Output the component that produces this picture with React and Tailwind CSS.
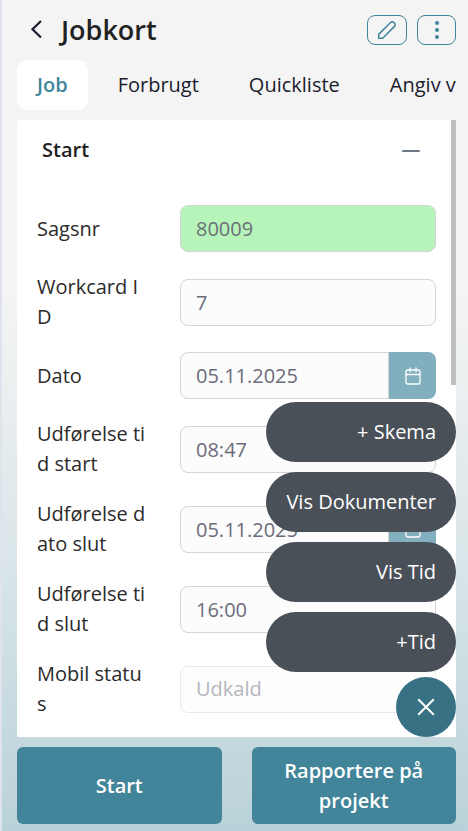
import { useState } from "react"

const tabs = ["Job", "Forbrugt", "Quickliste", "Angiv v"]
const actions = ["+ Skema", "Vis Dokumenter", "Vis Tid", "+Tid"]

const fields = [
  { id: "sagsnr", label: "Sagsnr", value: "80009", type: "case" },
  { id: "workcard", label: "Workcard ID", value: "7", type: "text" },
  { id: "dato", label: "Dato", value: "05.11.2025", type: "date" },
  { id: "tidstart", label: "Udførelse tid start", value: "08:47", type: "text" },
  { id: "datoslut", label: "Udførelse dato slut", value: "05.11.2025", type: "date" },
  { id: "tidslut", label: "Udførelse tid slut", value: "16:00", type: "text" },
  { id: "status", label: "Mobil status", value: "Udkald", type: "select" },
]

function CalendarIcon() {
  return (
    <svg width="16" height="18" viewBox="0 0 16 18" fill="none" stroke="currentColor" strokeWidth="1.3" strokeLinecap="round">
      <rect x="1" y="3" width="14" height="14" rx="1.6" />
      <path d="M1 7.5h14M5 0.8v4M11 0.8v4" />
    </svg>
  )
}

function Field({ field }) {
  const base = "h-[47px] w-full min-w-0 border border-[#d5d5d8] px-[15px] text-xl outline-none"

  return (
    <div className="flex items-center gap-[31px]">
      <label htmlFor={field.id} className="w-28 shrink-0 break-all leading-[30px] text-[#2b2b2b]">{field.label}</label>
      {field.type === "select" ? (
        <select id={field.id} disabled className={base + " appearance-none rounded-lg bg-[#fcfcfc] text-[#6b6b7b] opacity-50"}>
          <option>{field.value}</option>
        </select>
      ) : field.type === "date" ? (
        <div className="flex min-w-0 flex-1">
          <input id={field.id} defaultValue={field.value} className={base + " rounded-l-lg bg-[#fcfcfc] text-[#6b6b7b]"} />
          <button type="button" aria-label="Vælg dato" className="flex h-[47px] w-[47px] shrink-0 items-center justify-center rounded-r-lg bg-[#82afbd] text-white">
            <CalendarIcon />
          </button>
        </div>
      ) : field.type === "case" ? (
        <input id={field.id} defaultValue={field.value} className={base + " rounded-lg bg-[#b7f4b9] text-[#6b7078]"} />
      ) : (
        <input id={field.id} defaultValue={field.value} className={base + " rounded-lg bg-[#fcfcfc] text-[#6b6b7b]"} />
      )}
    </div>
  )
}

export default function App() {
  const [active, setActive] = useState("Job")
  const [expanded, setExpanded] = useState(true)
  const [menuOpen, setMenuOpen] = useState(true)

  return (
    <div className="min-h-screen border-l-2 border-[#dfe4ec] bg-linear-to-b from-[#f4f4f4] from-35% via-[#dce7ea] via-65% to-[#b9d2d9] pr-3 pb-[7px] pl-[15px] font-['Open_Sans',sans-serif] text-xl leading-[30px]">
      <header className="flex h-[60px] items-center">
        <button type="button" aria-label="Tilbage" className="flex w-11 items-center pl-3 text-[#1c1b2e]">
          <svg width="16" height="20" viewBox="0 0 16 20" fill="none" stroke="currentColor" strokeWidth="2.2">
            <path d="M12 1L3.500 9.200l8.500 8.300" />
          </svg>
        </button>
        <h1 className="text-[27px] font-semibold text-[#212121]">Jobkort</h1>
        <div className="ml-auto flex gap-2.5 text-[#42859a]">
          <button type="button" aria-label="Rediger" className="flex h-[30px] w-10 items-center justify-center rounded-lg border border-current">
            <svg width="20" height="20" viewBox="0 0 20 20" fill="none" stroke="currentColor" strokeWidth="1.500" strokeLinejoin="round">
              <path d="M1.700 18.300v-3.900L13.600 2.500a2.300 2.300 0 0 1 3.300 0l.6.6a2.300 2.300 0 0 1 0 3.300L5.600 18.300z" />
            </svg>
          </button>
          <button type="button" aria-label="Mere" className="flex h-[30px] w-[39px] items-center justify-center rounded-lg border border-current">
            <svg width="4" height="20" viewBox="0 0 4 20" fill="currentColor">
              <circle cx="2" cy="3" r="2" />
              <circle cx="2" cy="10" r="2" />
              <circle cx="2" cy="17" r="2" />
            </svg>
          </button>
        </div>
      </header>

      <nav className="flex gap-2.5 overflow-hidden">
        {tabs.map((tab) => (
          <button
            key={tab}
            type="button"
            onClick={() => setActive(tab)}
            className={
              tab === active
                ? "h-[50px] shrink-0 rounded-[10px] bg-white px-5 font-semibold text-[#42859a]"
                : "h-[50px] shrink-0 rounded-[10px] px-5 text-[#1c1b2e]"
            }
          >
            {tab}
          </button>
        ))}
      </nav>

      <main className="relative mt-2.5 rounded-t bg-white px-5 pb-[18px]">
        <div className="flex h-[60px] items-center justify-between pr-4 pl-[5px]">
          <h2 className="font-semibold text-[#212121]">Start</h2>
          <button type="button" aria-label="Fold sammen" onClick={() => setExpanded(!expanded)} className="text-[#6b7785]">
            <svg width="18" height="18" viewBox="0 0 18 18" stroke="currentColor" strokeWidth="2" strokeLinecap="round">
              <path d="M1 10h16" />
            </svg>
          </button>
        </div>
        {expanded && (
          <div className="flex flex-col gap-5 pt-[25px]">
            {fields.map((field) => (
              <Field key={field.id} field={field} />
            ))}
          </div>
        )}

        {/* scroll thumb */}
        <div className="absolute top-0 right-0 h-[265px] w-[5px] bg-[#bfbfbf]" />

        {/* floating action menu */}
        <div className="absolute right-0 bottom-0 flex flex-col items-end gap-[5px]">
          {menuOpen && (
            <div className="flex flex-col gap-2.5">
              {actions.map((action) => (
                <button key={action} type="button" className="h-[60px] rounded-full bg-[#4a5058] px-5 text-right text-white">{action}</button>
              ))}
            </div>
          )}
          <button type="button" aria-label="Luk menu" onClick={() => setMenuOpen(!menuOpen)} className="flex h-[60px] w-[60px] items-center justify-center rounded-full bg-[#387184] text-white">
            <svg width="18" height="18" viewBox="0 0 18 18" stroke="currentColor" strokeWidth="2">
              <path d="M1.200 1.200l15.600 15.600M16.800 1.200L1.200 16.800" />
            </svg>
          </button>
        </div>
      </main>

      <footer className="mt-2.5 grid grid-cols-2 gap-[30px] font-semibold text-white">
        <button type="button" className="min-h-[77px] rounded-md bg-[#42859a] px-5 py-2">Start</button>
        <button type="button" className="min-h-[77px] rounded-md bg-[#42859a] px-5 py-2">Rapportere på projekt</button>
      </footer>
    </div>
  )
}
